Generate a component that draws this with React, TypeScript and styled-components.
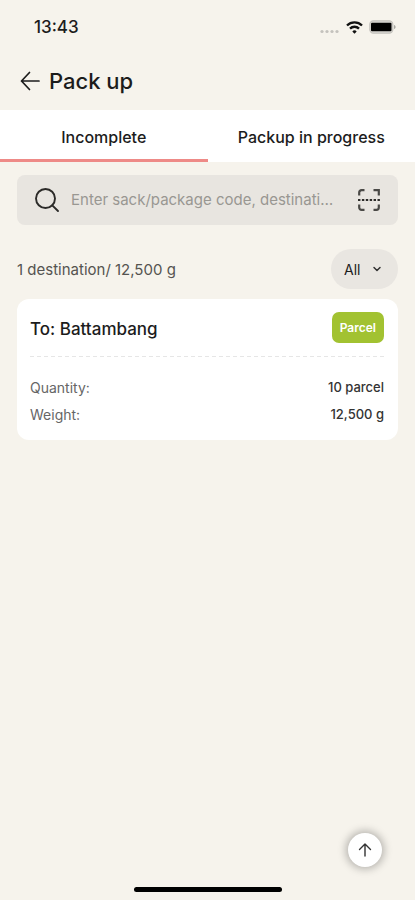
import React, { useState } from "react";
import styled, { createGlobalStyle } from "styled-components";

const GlobalStyle = createGlobalStyle`
  *, *::before, *::after { box-sizing: border-box; }
  body {
    margin: 0;
    background: #f6f3ec;
    color: #1c1c1c;
    font-family: Inter, "Liberation Sans", sans-serif;
  }
  button, input, select { font: inherit; color: inherit; }
`;

const Screen = styled.div`
  min-height: 100vh;
  display: flex;
  flex-direction: column;
`;

const StatusBar = styled.div`
  display: flex;
  align-items: center;
  justify-content: space-between;
  height: 54px;
  padding: 0 19px 0 34px;
  font-size: 17px;
  font-weight: 500;
`;

const StatusIcons = styled.div`
  display: flex;
  align-items: center;
  gap: 6px;
`;

const Header = styled.header`
  display: flex;
  align-items: center;
  gap: 8px;
  height: 56px;
  padding: 0 19px 2px;
`;

const IconButton = styled.button`
  display: grid;
  place-items: center;
  flex: none;
  padding: 0;
  border: 0;
  background: none;
  cursor: pointer;
`;

const Title = styled.h1`
  margin: 0;
  font-size: 22px;
  line-height: 28px;
  font-weight: 500;
`;

const Tabs = styled.div`
  display: grid;
  grid-template-columns: 1fr 1fr;
  background: #fff;
`;

const Tab = styled.button<{ $active: boolean }>`
  height: 52px;
  padding: 5px 0 0;
  border: 0;
  border-bottom: 3px solid ${(p) => (p.$active ? "#ee8a87" : "#fff")};
  background: none;
  font-size: 16px;
  font-weight: 500;
  white-space: nowrap;
  cursor: pointer;
`;

const Main = styled.main`
  flex: 1;
  padding: 13px 17px 0;
`;

const SearchBox = styled.label`
  display: flex;
  align-items: center;
  height: 50px;
  padding: 0 17px;
  border-radius: 8px;
  background: #e8e5e0;
`;

const SearchInput = styled.input`
  flex: 1;
  min-width: 0;
  margin: 0 16px 0 11px;
  padding: 0;
  border: 0;
  outline: 0;
  background: none;
  font-size: 15px;
  line-height: 24px;
  text-overflow: ellipsis;
  &::placeholder {
    color: #999792;
    opacity: 1;
  }
`;

const SummaryRow = styled.div`
  display: flex;
  align-items: center;
  justify-content: space-between;
  margin: 24px 0 10px;
`;

const Summary = styled.p`
  margin: 0;
  padding-top: 2px;
  font-size: 15px;
  line-height: 20px;
  color: #555350;
`;

const FilterPill = styled.label`
  display: grid;
  align-items: center;
  border-radius: 20px;
  background: #e9e6e1;
  & > * { grid-area: 1 / 1; }
  svg {
    justify-self: end;
    margin-right: 16px;
    pointer-events: none;
  }
`;

const FilterSelect = styled.select`
  width: 67px;
  height: 40px;
  padding: 0 28px 0 13px;
  border: 0;
  border-radius: 20px;
  appearance: none;
  background: none;
  font-size: 14px;
`;

const Card = styled.article`
  padding: 13px 14px 12px 13px;
  border-radius: 12px;
  background: #fff;
`;

const CardHead = styled.div`
  display: flex;
  align-items: center;
  justify-content: space-between;
  padding-bottom: 14px;
  background: repeating-linear-gradient(90deg, #e6e6e6 0 4px, transparent 4px 7px)
    bottom / 100% 1px no-repeat;
`;

const Destination = styled.h2`
  margin: 0;
  padding-top: 2px;
  font-size: 17px;
  line-height: 24px;
  font-weight: 500;
`;

const Badge = styled.span`
  padding: 6px 8px;
  border-radius: 7px;
  background: #a2c231;
  color: #fff;
  font-size: 12px;
  line-height: 19px;
  font-weight: 600;
`;

const Details = styled.dl`
  margin: 17px 0 0;
`;

const Detail = styled.div`
  display: flex;
  align-items: center;
  justify-content: space-between;
  font-size: 14px;
  line-height: 27px;
  dt { color: #666; }
  dd {
    margin: 0;
    font-size: 13px;
    font-weight: 500;
    color: #333;
  }
`;

const TopButton = styled(IconButton)`
  position: fixed;
  right: 33px;
  bottom: 33px;
  width: 34px;
  height: 34px;
  border-radius: 50%;
  background: #fff;
  box-shadow: 0 0 8px 2px rgba(0, 0, 0, 0.28);
`;

const HomeIndicator = styled.div`
  align-self: center;
  width: 148px;
  height: 5px;
  margin-bottom: 8px;
  border-radius: 3px;
  background: #000;
`;

const tabs = ["Incomplete", "Packup in progress"];
const details = [
  { label: "Quantity:", value: "10 parcel" },
  { label: "Weight:", value: "12,500 g" },
];

const SignalDots = () => (
  <svg width="20" height="17" viewBox="0 0 20 17" fill="#c4c2bd" aria-hidden="true">
    {[2, 7, 12, 17].map((x) => (
      <circle key={x} cx={x} cy="12.5" r="1.6" />
    ))}
  </svg>
);

const Wifi = () => (
  <svg width="17" height="13" viewBox="0 0 17 13" fill="none" stroke="#111" strokeWidth="2.3" aria-hidden="true">
    <path d="M1 4.5A10.6 10.6 0 0 1 16 4.5" />
    <path d="M4 7.6A6.4 6.4 0 0 1 13 7.6" />
    <path d="M8.5 12.7 6.3 10.4a3.2 3.2 0 0 1 4.4 0Z" fill="#111" stroke="none" />
  </svg>
);

const Battery = () => (
  <svg width="27" height="14" viewBox="0 0 27 14" aria-hidden="true">
    <rect x="0.8" y="0.8" width="23" height="12.4" rx="3.6" fill="#dddbd6" stroke="#c4c2bd" strokeWidth="1.2" />
    <rect x="2" y="2.7" width="20.5" height="8.6" rx="1" fill="#000" />
    <path d="M25 5v4c1-.4 1.6-1.1 1.6-2S26 5.4 25 5Z" fill="#aaa8a3" />
  </svg>
);

const BackArrow = () => (
  <svg width="22" height="22" viewBox="0 0 22 22" fill="none" stroke="#1c1c1c" strokeWidth="1.7" strokeLinecap="round" strokeLinejoin="round" aria-hidden="true">
    <path d="M20 11H2.5M10.5 2.5 2.5 11l8 8.5" />
  </svg>
);

const SearchIcon = () => (
  <svg width="26" height="26" viewBox="0 0 26 26" fill="none" stroke="#2c2b29" strokeWidth="1.9" strokeLinecap="round" aria-hidden="true">
    <circle cx="11.5" cy="11.5" r="9.5" />
    <path d="m18.3 18.3 5.7 5.7" />
  </svg>
);

const ScanIcon = () => (
  <svg width="24" height="24" viewBox="0 0 24 24" fill="none" stroke="#4a4946" strokeWidth="2.2" aria-hidden="true">
    <path d="M7.5 2.2H4.5A2.3 2.3 0 0 0 2.2 4.500V7.500M16.500 2.200h5.300v5.300M7.500 21.800h-3a2.300 2.300 0 0 1-2.300-2.300v-3M16.500 21.800h3a2.300 2.300 0 0 0 2.300-2.300v-3" />
    <path d="M1 12h22" stroke="#2c2b29" strokeWidth="1.800" strokeDasharray="2.400 1.500" />
  </svg>
);

const Chevron = () => (
  <svg width="10" height="8" viewBox="0 0 10 8" fill="none" stroke="#333" strokeWidth="1.5" strokeLinecap="round" strokeLinejoin="round" aria-hidden="true">
    <path d="m2 2.5 3 3 3-3" />
  </svg>
);

const UpArrow = () => (
  <svg width="14" height="16" viewBox="0 0 14 16" fill="none" stroke="#333" strokeWidth="1.4" strokeLinecap="round" strokeLinejoin="round" aria-hidden="true">
    <path d="M7 14V2M1.5 7.5 7 2l5.500 5.500" />
  </svg>
);

export default function App() {
  const [active, setActive] = useState(0);

  return (
    <Screen>
      <GlobalStyle />
      <StatusBar>
        <span>13:43</span>
        <StatusIcons>
          <SignalDots />
          <Wifi />
          <Battery />
        </StatusIcons>
      </StatusBar>
      <Header>
        <IconButton aria-label="Back">
          <BackArrow />
        </IconButton>
        <Title>Pack up</Title>
      </Header>
      <Tabs role="tablist">
        {tabs.map((name, i) => (
          <Tab key={name} role="tab" aria-selected={i === active} $active={i === active} onClick={() => setActive(i)}>
            {name}
          </Tab>
        ))}
      </Tabs>
      <Main>
        <SearchBox>
          <SearchIcon />
          <SearchInput
            type="text"
            aria-label="Search"
            placeholder="Enter sack/package code, destination code"
          />
          <IconButton aria-label="Scan code">
            <ScanIcon />
          </IconButton>
        </SearchBox>
        <SummaryRow>
          <Summary>1 destination/ 12,500 g</Summary>
          <FilterPill>
            <FilterSelect aria-label="Filter">
              <option>All</option>
              <option>Parcel</option>
            </FilterSelect>
            <Chevron />
          </FilterPill>
        </SummaryRow>
        <Card>
          <CardHead>
            <Destination>To: Battambang</Destination>
            <Badge>Parcel</Badge>
          </CardHead>
          <Details>
            {details.map((d) => (
              <Detail key={d.label}>
                <dt>{d.label}</dt>
                <dd>{d.value}</dd>
              </Detail>
            ))}
          </Details>
        </Card>
      </Main>
      <TopButton aria-label="Back to top">
        <UpArrow />
      </TopButton>
      <HomeIndicator />
    </Screen>
  );
}
